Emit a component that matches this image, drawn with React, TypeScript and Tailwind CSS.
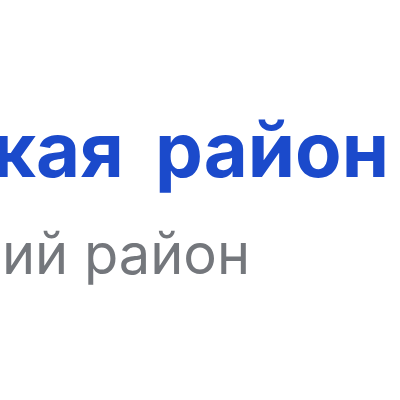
export default function App() {
  return (
    <div className="w-[400px] h-[400px] bg-white overflow-hidden flex flex-col font-['Inter',sans-serif]">
      <div className="mt-[111px] flex justify-end gap-[31px] pr-[11px] whitespace-nowrap font-bold text-[76px] leading-[76px] text-[#1b4acb]">
        <span>Московская</span>
        <span>район</span>
      </div>
      <div className="mt-[39px] flex whitespace-nowrap pl-[2px]">
        <span className="text-[56px] leading-[56px] text-[#74777c]">ий район</span>
      </div>
    </div>
  );
}
